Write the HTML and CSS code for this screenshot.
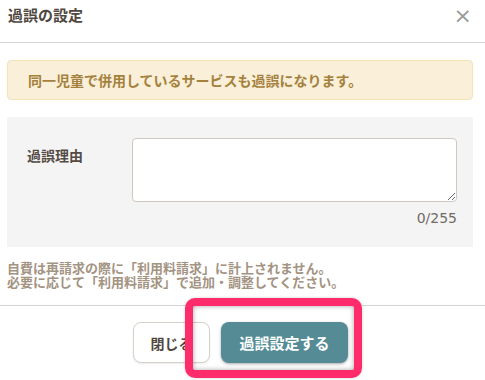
FILE: index.html
```html
<!DOCTYPE html>
<html lang="ja">
<head>
    <meta charset="UTF-8">
    <meta name="viewport" content="width=device-width, initial-scale=1.0">
    <title>過誤の設定</title>
    <link rel="stylesheet" href="styles.css">
</head>
<body>
    <div class="modal">
        <div class="modal-header">
            <h1 class="modal-title">過誤の設定</h1>
            <span class="close">&times;</span>
        </div>

        <div class="modal-body">
            <div class="alert">同一児童で併用しているサービスも過誤になります。</div>

            <div class="form-panel">
                <div class="form-row">
                    <label for="reason">過誤理由</label>
                    <div class="field">
                        <textarea id="reason"></textarea>
                        <div class="counter">0/255</div>
                    </div>
                </div>
            </div>

            <p class="note">自費は再請求の際に「利用料請求」に計上されません。<br>必要に応じて「利用料請求」で追加・調整してください。</p>
        </div>

        <div class="modal-footer">
            <button class="btn btn-close">閉じる</button>
            <button class="btn btn-primary">過誤設定する</button>
            <div class="highlight"></div>
        </div>
    </div>
</body>
</html>
```

FILE: styles.css
```css
body {
    margin: 0;
    font-family: "Noto Sans CJK JP", "Noto Sans", sans-serif;
    background: white;
    color: #544c44;
}
.modal {
    width: 485px;
    height: 380px;
    overflow: hidden;
}
.modal-header {
    height: 42px;
    border-bottom: 1px solid #d6d3d0;
    display: flex;
    justify-content: space-between;
    align-items: flex-start;
    padding: 0 13px 0 8px;
}
.modal-title {
    margin: 0;
    font-size: 15px;
    line-height: 30px;
    font-weight: bold;
    color: #4f4740;
}
.close {
    font-family: "DejaVu Sans", sans-serif;
    font-size: 22px;
    line-height: 32px;
    color: #9a9a9a;
}
.modal-body {
    padding: 17px 12px 0 7px;
}
.alert {
    height: 38px;
    border: 1px solid #f4e2b9;
    border-radius: 4px;
    background: #faefd9;
    color: #a4813c;
    font-size: 14px;
    font-weight: bold;
    line-height: 38px;
    padding-left: 20px;
}
.form-panel {
    margin-top: 17px;
    height: 130px;
    background: #f4f4f4;
    box-sizing: border-box;
    padding: 21px 16px 0 20px;
}
.form-row {
    display: flex;
}
.form-row label {
    width: 105px;
    flex: none;
    font-size: 14px;
    font-weight: bold;
    line-height: 20px;
    padding-top: 7px;
    color: #544c44;
}
.field {
    flex: 1;
}
.field textarea {
    display: block;
    width: 100%;
    height: 64px;
    box-sizing: border-box;
    border: 1px solid #cfc8c0;
    border-radius: 4px;
    background: white;
}
.counter {
    margin-top: 8px;
    text-align: right;
    font-family: "DejaVu Sans", sans-serif;
    font-size: 14px;
    line-height: 16px;
    color: #6f6a66;
}
.note {
    margin: 14px 0 0;
    font-size: 13px;
    font-weight: bold;
    line-height: 14px;
    color: #a39382;
}
.modal-footer {
    position: relative;
    margin-top: 16px;
    border-top: 1px solid #d6d3d0;
    padding-top: 16px;
    display: flex;
    justify-content: center;
    gap: 11px;
    padding-right: 4px;
}
.btn {
    height: 41px;
    border-radius: 8px;
    font-family: "Noto Sans CJK JP", sans-serif;
    font-weight: bold;
    cursor: pointer;
}
.btn-close {
    width: 77px;
    background: white;
    border: 1px solid #d6d0c9;
    color: #4f4740;
    font-size: 14px;
    box-shadow: 0 1px 2px rgba(0, 0, 0, 0.08);
}
.btn-primary {
    width: 127px;
    background: #548b95;
    border: none;
    color: white;
    font-size: 15px;
    box-shadow: 0 1px 3px rgba(0, 0, 0, 0.35);
}
.highlight {
    position: absolute;
    left: 185px;
    top: -8px;
    width: 161px;
    height: 64px;
    border: 8px solid #fe2c6b;
    border-radius: 10px;
    box-shadow: inset 0 0 5px rgba(0, 0, 0, 0.35), 0 0 3px rgba(0, 0, 0, 0.2);
}
```
